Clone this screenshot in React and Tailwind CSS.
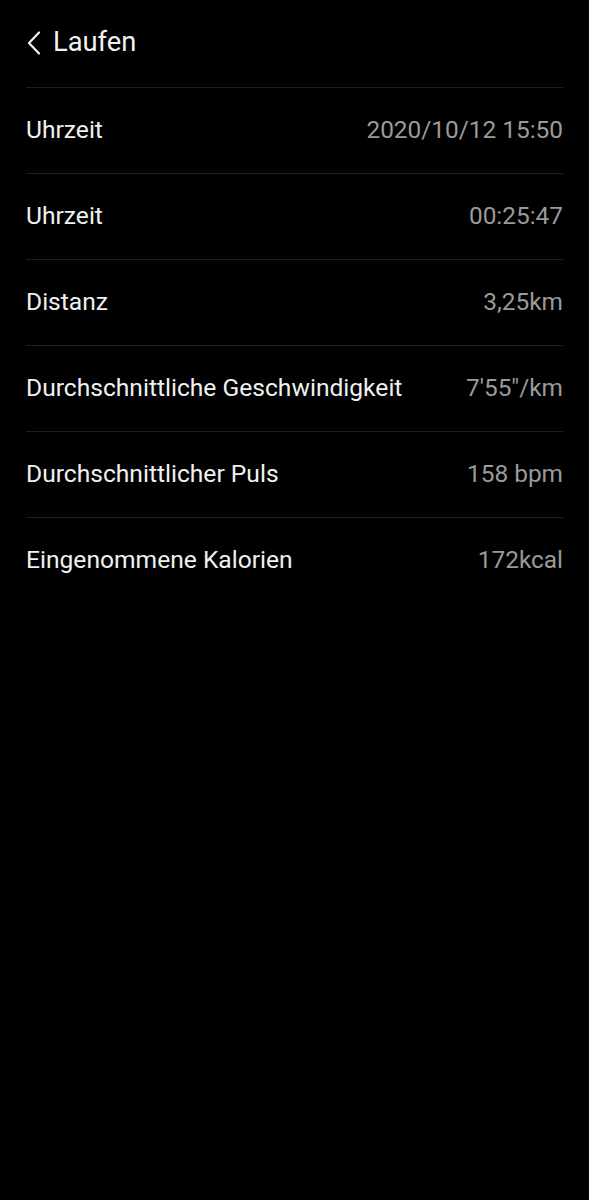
const rows = [
  ["Uhrzeit", "2020/10/12 15:50"],
  ["Uhrzeit", "00:25:47"],
  ["Distanz", "3,25km"],
  ["Durchschnittliche Geschwindigkeit", "7'55\"/km"],
  ["Durchschnittlicher Puls", "158 bpm"],
  ["Eingenommene Kalorien", "172kcal"],
];

export default function App() {
  return (
    <div className="min-h-[1200px] w-[589px] bg-black font-['Roboto',sans-serif]">
      <div className="flex h-[87px] items-center px-[26px] pb-[2px]">
        <svg width="14" height="24" viewBox="0 0 14 24" className="ml-[1px] mr-[12px]">
          <path d="M12 1.5 L2 12 L12 22.5" fill="none" stroke="#f2f2f2" strokeWidth="2.2" strokeLinecap="round" strokeLinejoin="round" />
        </svg>
        <span className="text-[27.3px] text-[#f2f2f2]">Laufen</span>
      </div>
      <div className="mx-[26px]">
        {rows.map(([label, value], i) => (
          <div key={i} className="flex h-[86px] items-center justify-between border-t border-[#1e1e1e]">
            <span className="text-[24.6px] text-[#f0f0f0]">{label}</span>
            <span className="text-[24.4px] text-[#9a9a9a]">{value}</span>
          </div>
        ))}
      </div>
    </div>
  );
}
